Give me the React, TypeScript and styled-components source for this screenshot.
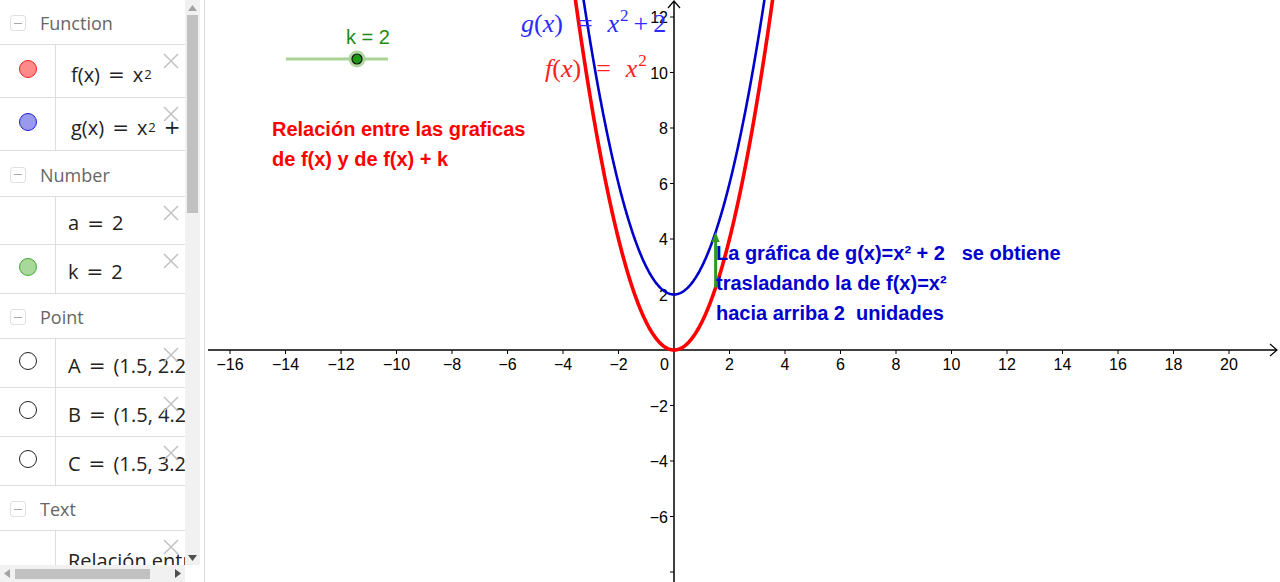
import React from 'react';
import styled, { createGlobalStyle } from 'styled-components';

const GlobalStyle = createGlobalStyle`
  html, body {
    margin: 0;
    padding: 0;
    background: #fff;
    overflow: hidden;
  }
  #root {
    width: 1280px;
    height: 582px;
  }
`;

// graph geometry (local to the graphics view)
const GW = 1072;
const GH = 582;
const OX = 466;
const OY = 350;
const U = 27.75;
const px = (x: number) => OX + x * U;
const py = (y: number) => OY - y * U;

const Page = styled.div`
  display: flex;
  width: 1280px;
  height: 582px;
  font-family: 'Open Sans', sans-serif;
`;

const Sidebar = styled.div`
  width: 200px;
  flex-shrink: 0;
  display: flex;
  flex-direction: column;
`;

const SideMain = styled.div`
  display: flex;
  height: 565px;
`;

const List = styled.div`
  width: 185px;
  overflow: hidden;
`;

const VScroll = styled.div`
  width: 15px;
  background: #f1f1f1;
  display: flex;
  flex-direction: column;
  align-items: center;
  justify-content: space-between;
  padding: 5px 0 4px;
  box-sizing: border-box;
`;

const VThumb = styled.div`
  width: 11px;
  height: 198px;
  background: #c1c1c1;
  margin-top: 4px;
  flex-shrink: 0;
`;

const VSpacer = styled.div`
  flex: 1;
`;

const HScrollRow = styled.div`
  display: flex;
  height: 17px;
`;

const HScroll = styled.div`
  width: 185px;
  background: #f1f1f1;
  display: flex;
  align-items: center;
  padding: 0 4px;
  box-sizing: border-box;
  gap: 5px;
`;

const HThumb = styled.div`
  width: 135px;
  height: 10px;
  background: #c1c1c1;
`;

const HSpacer = styled.div`
  flex: 1;
`;

const Corner = styled.div`
  width: 15px;
  background: #fff;
`;

const Splitter = styled.div`
  width: 8px;
  flex-shrink: 0;
  display: flex;
  justify-content: center;
  &::after {
    content: '';
    width: 1px;
    background: #dcdcdc;
  }
`;

const Graph = styled.div`
  position: relative;
  flex: 1;
  overflow: hidden;
`;

const Header = styled.div<{ $h: number }>`
  height: ${(p) => p.$h}px;
  box-sizing: border-box;
  border-bottom: 1px solid #dddddd;
  display: flex;
  align-items: center;
  padding: 2px 0 0 10px;
  gap: 14px;
  color: #666;
  font-size: 18px;
`;

const Collapse = styled.div`
  width: 14px;
  height: 14px;
  border: 1px solid #e0e0e0;
  border-radius: 3px;
  display: flex;
  align-items: center;
  justify-content: center;
  &::after {
    content: '';
    width: 8px;
    height: 1px;
    background: #aaa;
  }
`;

const Item = styled.div<{ $h: number }>`
  position: relative;
  height: ${(p) => p.$h}px;
  box-sizing: border-box;
  border-bottom: 1px solid #dddddd;
  display: grid;
  grid-template-columns: 56px 1fr;
`;

const MarkerCell = styled.div`
  border-right: 1px solid #dddddd;
  display: flex;
  align-items: center;
  justify-content: center;
  padding-bottom: 4px;
`;

const Marker = styled.div<{ $fill: string; $stroke: string }>`
  width: 18px;
  height: 18px;
  box-sizing: border-box;
  border-radius: 50%;
  background: ${(p) => p.$fill};
  border: 1px solid ${(p) => p.$stroke};
`;

const Content = styled.div<{ $pt: number; $pl: number }>`
  display: flex;
  align-items: center;
  padding: ${(p) => p.$pt}px 0 0 ${(p) => p.$pl}px;
  font-size: 20px;
  color: #222;
  white-space: nowrap;
  overflow: hidden;
  sup {
    font-size: 13px;
    vertical-align: 9px;
    line-height: 0;
    margin-left: 1px;
  }
`;

const Eq = styled.span`
  font-family: 'DejaVu Sans', sans-serif;
  margin: 0 8px;
`;

const Delete = styled.svg`
  position: absolute;
  left: 163px;
  top: 8px;
`;

const TextBox = styled.div<{ $x: number; $y: number; $color: string }>`
  position: absolute;
  left: ${(p) => p.$x}px;
  top: ${(p) => p.$y}px;
  color: ${(p) => p.$color};
  font-family: 'Liberation Sans', Arial, sans-serif;
  font-weight: bold;
  font-size: 20px;
  line-height: 30px;
  white-space: pre;
`;

const Formula = styled.div<{ $x: number; $y: number; $color: string }>`
  position: absolute;
  left: ${(p) => p.$x}px;
  top: ${(p) => p.$y}px;
  color: ${(p) => p.$color};
  font-family: 'Liberation Serif', 'Times New Roman', serif;
  font-size: 26px;
  display: flex;
  align-items: baseline;
  gap: 15px;
  white-space: nowrap;
  i {
    font-style: italic;
  }
  sup {
    font-size: 17px;
    vertical-align: 11px;
    line-height: 0;
    margin-left: 1px;
  }
`;

const Tight = styled.span`
  display: inline-flex;
  align-items: baseline;
  gap: 5px;
`;

const CloseIcon = () => (
  <Delete width="16" height="16" viewBox="0 0 16 16">
    <path d="M1 1 L15 15 M15 1 L1 15" stroke="#c4c4c4" strokeWidth="1.6" fill="none" />
  </Delete>
);

type Entry =
  | { kind: 'head'; label: string; h: number }
  | { kind: 'item'; h: number; pt: number; pl?: number; marker?: [string, string]; body: React.ReactNode };

const entries: Entry[] = [
  { kind: 'head', label: 'Function', h: 45 },
  {
    kind: 'item',
    h: 53,
    pt: 6,
    pl: 15,
    marker: ['#ff8a8a', '#ee2222'],
    body: (
      <>
        f(x)<Eq>=</Eq>x<sup>2</sup>
      </>
    ),
  },
  {
    kind: 'item',
    h: 53,
    pt: 6,
    pl: 15,
    marker: ['#9999ee', '#2222cc'],
    body: (
      <>
        g(x)<Eq>=</Eq>x<sup>2</sup>
        <Eq>+</Eq>2
      </>
    ),
  },
  { kind: 'head', label: 'Number', h: 46 },
  { kind: 'item', h: 48, pt: 4, body: <>a<Eq>=</Eq>2</> },
  { kind: 'item', h: 49, pt: 4, marker: ['#a8d89a', '#44aa33'], body: <>k<Eq>=</Eq>2</> },
  { kind: 'head', label: 'Point', h: 45 },
  { kind: 'item', h: 49, pt: 4, marker: ['#ffffff', '#222222'], body: <>A<Eq>=</Eq>(1.5,&nbsp;2.25)</> },
  { kind: 'item', h: 49, pt: 4, marker: ['#ffffff', '#222222'], body: <>B<Eq>=</Eq>(1.5,&nbsp;4.25)</> },
  { kind: 'item', h: 49, pt: 4, marker: ['#ffffff', '#222222'], body: <>C<Eq>=</Eq>(1.5,&nbsp;3.25)</> },
  { kind: 'head', label: 'Text', h: 45 },
  { kind: 'item', h: 60, pt: 0, body: <>Relación entre las graficas</> },
];

const Algebra = () => (
  <List>
    {entries.map((e, i) =>
      e.kind === 'head' ? (
        <Header key={i} $h={e.h}>
          <Collapse />
          {e.label}
        </Header>
      ) : (
        <Item key={i} $h={e.h}>
          <MarkerCell>{e.marker && <Marker $fill={e.marker[0]} $stroke={e.marker[1]} />}</MarkerCell>
          <Content $pt={e.pt} $pl={e.pl ?? 12}>
            {e.body}
          </Content>
          <CloseIcon />
        </Item>
      )
    )}
  </List>
);

const parabola = (k: number) => {
  const pts: string[] = [];
  for (let x = -3.8; x <= 3.8001; x += 0.02) {
    pts.push(`${px(x).toFixed(2)},${py(x * x + k).toFixed(2)}`);
  }
  return 'M' + pts.join(' L');
};

const fmt = (n: number) => (n < 0 ? '\u2212' + Math.abs(n) : String(n));

const Plot = () => {
  const xs: number[] = [];
  for (let v = -16; v <= 20; v += 2) if (v !== 0) xs.push(v);
  const ys = [12, 10, 8, 6, 4, 2, -2, -4, -6];
  const tickFont = { fontFamily: "'Liberation Sans', Arial, sans-serif", fontSize: 16 };
  const ax = px(1.5);
  return (
    <svg width={GW} height={GH} viewBox={`0 0 ${GW} ${GH}`} style={{ display: 'block' }}>
      {/* axes */}
      <line x1={0} y1={OY} x2={GW - 3} y2={OY} stroke="#000" strokeWidth={1.3} />
      <path d={`M${GW - 10} ${OY - 6} L${GW - 3} ${OY} L${GW - 10} ${OY + 6}`} stroke="#000" strokeWidth={1.2} fill="none" />
      <line x1={OX} y1={1} x2={OX} y2={GH} stroke="#000" strokeWidth={1.5} />
      <path d={`M${OX - 6} 8 L${OX} 1 L${OX + 6} 8`} stroke="#000" strokeWidth={1.2} fill="none" />
      {xs.map((v) => (
        <g key={'x' + v}>
          <line x1={px(v)} y1={OY} x2={px(v)} y2={OY + 4} stroke="#000" strokeWidth={1} />
          <text x={px(v)} y={OY + 20} textAnchor="middle" {...tickFont}>
            {fmt(v)}
          </text>
        </g>
      ))}
      <text x={OX - 5} y={OY + 20} textAnchor="end" {...tickFont}>
        0
      </text>
      {[...ys, -8].map((v) => (
        <line key={'yt' + v} x1={OX - 4} y1={py(v)} x2={OX} y2={py(v)} stroke="#000" strokeWidth={1} />
      ))}
      {ys.map((v) => (
        <text key={'y' + v} x={OX - 6} y={py(v) + 6} textAnchor="end" {...tickFont}>
          {fmt(v)}
        </text>
      ))}
      {/* curves */}
      <path d={parabola(0)} stroke="#ff0000" strokeWidth={3.6} fill="none" />
      <path d={parabola(2)} stroke="#0000cc" strokeWidth={2.6} fill="none" />
      {/* translation vector */}
      <line x1={ax} y1={py(2.25)} x2={ax} y2={py(4.25) + 8} stroke="#2e9a1e" strokeWidth={3} />
      <path d={`M${ax - 4} ${py(4.25) + 10} L${ax} ${py(4.25)} L${ax + 4} ${py(4.25) + 10} Z`} fill="#2e9a1e" />
      {/* slider */}
      <line x1={78} y1={59} x2={180} y2={59} stroke="#a8d496" strokeWidth={3} />
      <circle cx={149} cy={59} r={8.5} fill="#a8d496" opacity={0.9} />
      <circle cx={149} cy={59} r={5} fill="#1e9914" stroke="#111" strokeWidth={1.2} />
      <text x={138} y={44} fill="#1e8c14" fontFamily="'Liberation Sans', Arial, sans-serif" fontSize={20}>
        k = 2
      </text>
    </svg>
  );
};

const ArrowUp = () => (
  <svg width="9" height="6" viewBox="0 0 9 6">
    <path d="M0 6 L4.5 0 L9 6 Z" fill="#a3a3a3" />
  </svg>
);

const ArrowDown = () => (
  <svg width="9" height="6" viewBox="0 0 9 6">
    <path d="M0 0 L4.5 6 L9 0 Z" fill="#505050" />
  </svg>
);

const ArrowLeft = () => (
  <svg width="6" height="9" viewBox="0 0 6 9">
    <path d="M6 0 L0 4.5 L6 9 Z" fill="#a3a3a3" />
  </svg>
);

const ArrowRight = () => (
  <svg width="6" height="9" viewBox="0 0 6 9">
    <path d="M0 0 L6 4.5 L0 9 Z" fill="#505050" />
  </svg>
);

export default function App() {
  return (
    <>
      <GlobalStyle />
      <Page>
        <Sidebar>
          <SideMain>
            <Algebra />
            <VScroll>
              <ArrowUp />
              <VThumb />
              <VSpacer />
              <ArrowDown />
            </VScroll>
          </SideMain>
          <HScrollRow>
            <HScroll>
              <ArrowLeft />
              <HThumb />
              <HSpacer />
              <ArrowRight />
            </HScroll>
            <Corner />
          </HScrollRow>
        </Sidebar>
        <Splitter />
        <Graph>
          <Plot />
          <Formula $x={313} $y={9} $color="#2b2bff">
            <span>
              <i>g</i>(<i>x</i>)
            </span>
            <span>=</span>
            <Tight>
              <span>
                <i>x</i>
                <sup>2</sup>
              </span>
              <span>+</span>
              <span>2</span>
            </Tight>
          </Formula>
          <Formula $x={337} $y={54} $color="#ff2020">
            <span>
              <i>f</i>(<i>x</i>)
            </span>
            <span>=</span>
            <span>
              <i>x</i>
              <sup>2</sup>
            </span>
          </Formula>
          <TextBox $x={64} $y={114} $color="#ff0000">
            {'Relación entre las graficas\nde f(x) y de f(x) + k'}
          </TextBox>
          <TextBox $x={508} $y={238} $color="#0000cc">
            {'La gráfica de g(x)=x² + 2   se obtiene\ntrasladando la de f(x)=x²\nhacia arriba 2  unidades'}
          </TextBox>
        </Graph>
      </Page>
    </>
  );
}
